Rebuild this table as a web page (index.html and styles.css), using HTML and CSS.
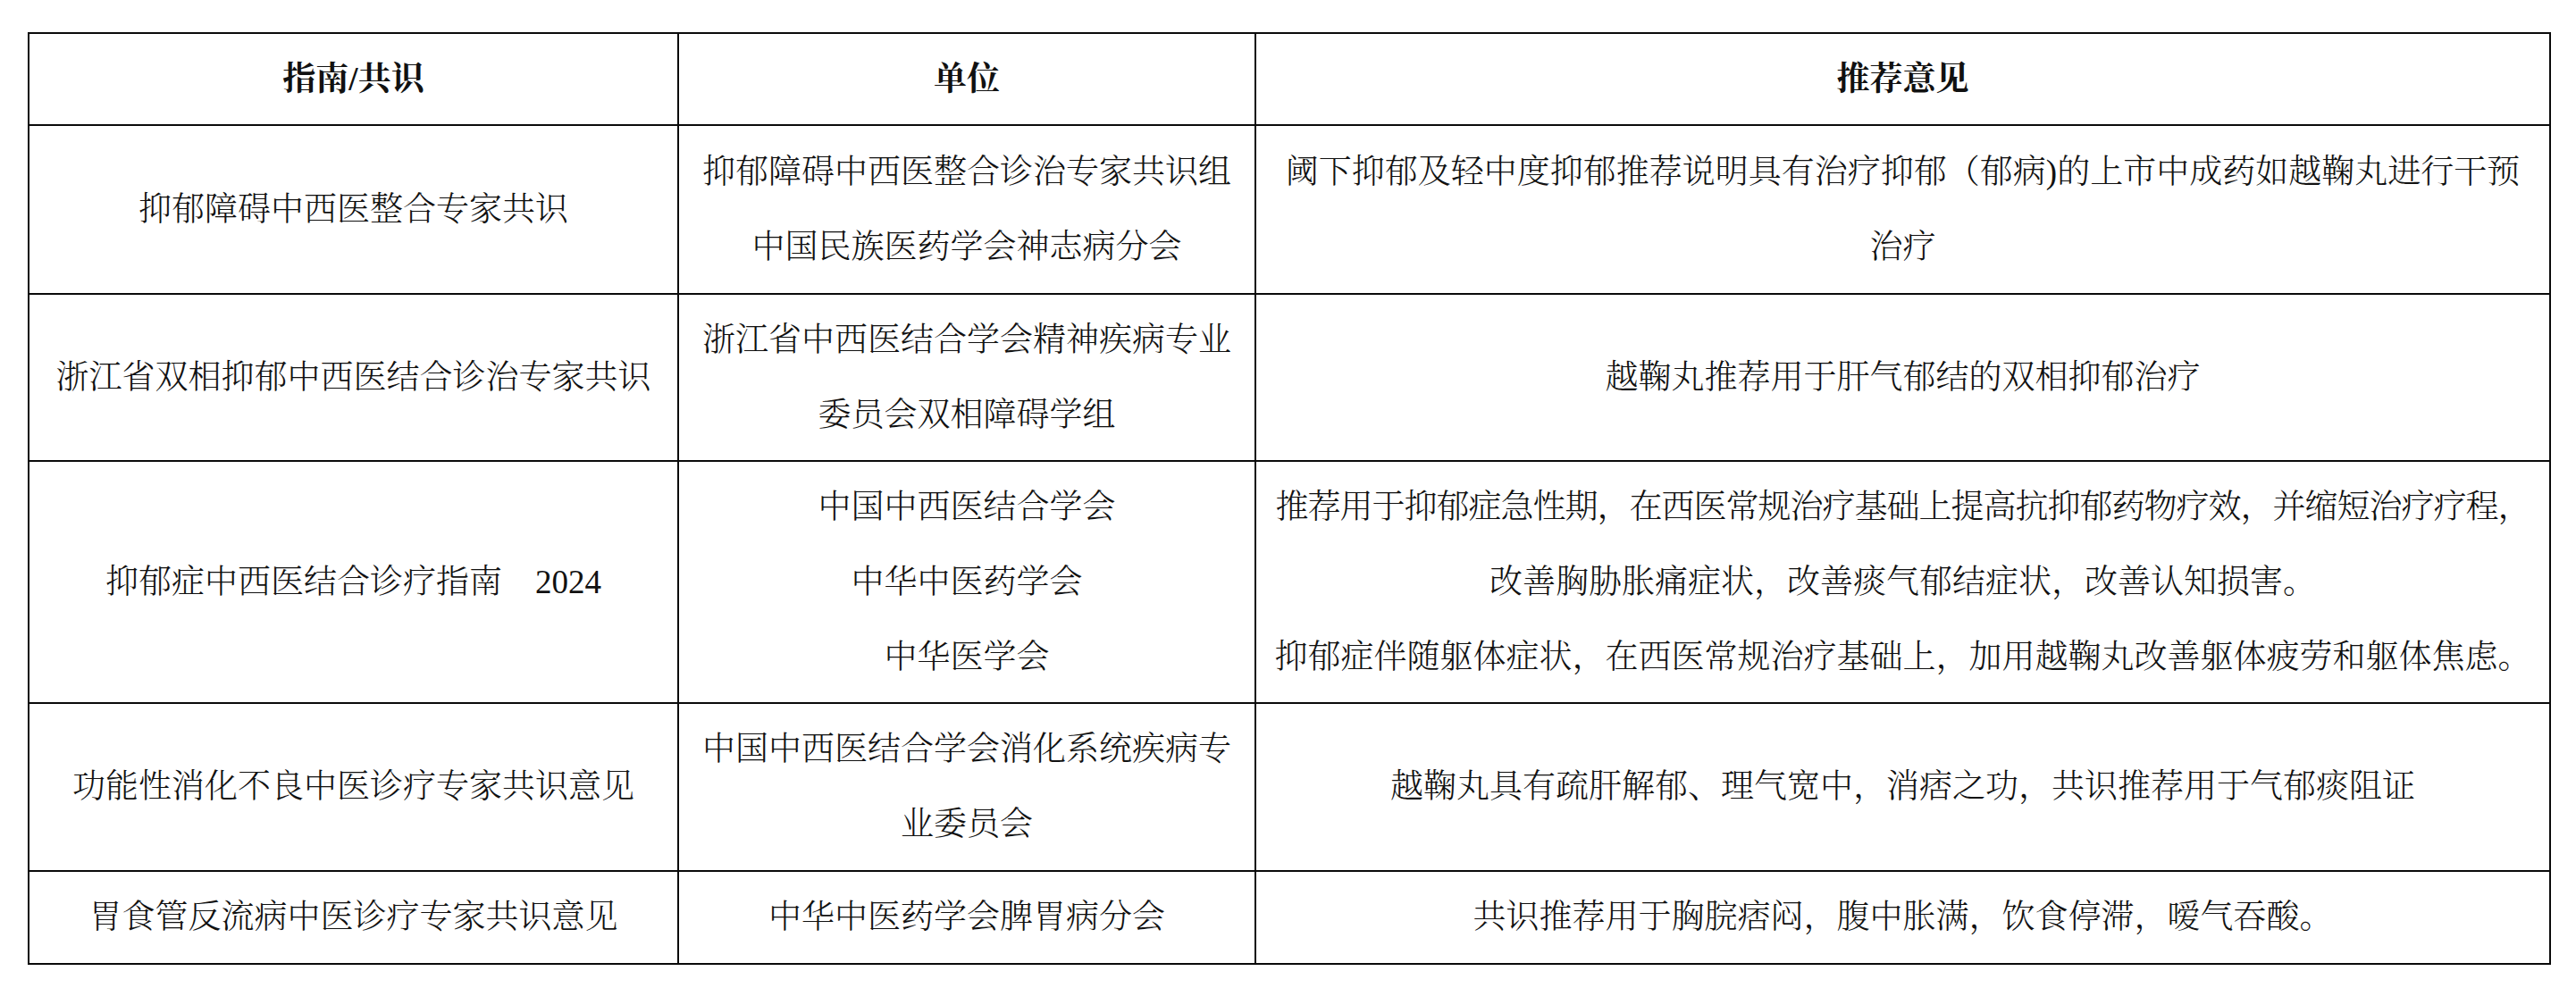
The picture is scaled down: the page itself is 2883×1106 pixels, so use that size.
FILE: index.html
```html
<!DOCTYPE html>
<html lang="zh-CN">
<head>
<meta charset="utf-8">
<title>越鞠丸 指南/共识推荐</title>
<link rel="stylesheet" href="styles.css">
</head>
<body>
<div class="page">
  <div class="grid">
    <div class="cell head">指南/共识</div>
    <div class="cell head">单位</div>
    <div class="cell head">推荐意见</div>

    <div class="cell">抑郁障碍中西医整合专家共识</div>
    <div class="cell">抑郁障碍中西医整合诊治专家共识组<br>中国民族医药学会神志病分会</div>
    <div class="cell">阈下抑郁及轻中度抑郁推荐说明具有治疗抑郁（郁病)的上市中成药如越鞠丸进行干预<br>治疗</div>

    <div class="cell">浙江省双相抑郁中西医结合诊治专家共识</div>
    <div class="cell">浙江省中西医结合学会精神疾病专业<br>委员会双相障碍学组</div>
    <div class="cell">越鞠丸推荐用于肝气郁结的双相抑郁治疗</div>

    <div class="cell">抑郁症中西医结合诊疗指南　2024</div>
    <div class="cell">中国中西医结合学会<br>中华中医药学会<br>中华医学会</div>
    <div class="cell"><div class="lines"><div class="tight">推荐用于抑郁症急性期，在西医常规治疗基础上提高抗抑郁药物疗效，并缩短治疗疗程，</div><div>改善胸胁胀痛症状，改善痰气郁结症状，改善认知损害。</div><div>抑郁症伴随躯体症状，在西医常规治疗基础上，加用越鞠丸改善躯体疲劳和躯体焦虑。</div></div></div>

    <div class="cell">功能性消化不良中医诊疗专家共识意见</div>
    <div class="cell">中国中西医结合学会消化系统疾病专<br>业委员会</div>
    <div class="cell">越鞠丸具有疏肝解郁、理气宽中，消痞之功，共识推荐用于气郁痰阻证</div>

    <div class="cell">胃食管反流病中医诊疗专家共识意见</div>
    <div class="cell">中华中医药学会脾胃病分会</div>
    <div class="cell">共识推荐用于胸脘痞闷，腹中胀满，饮食停滞，嗳气吞酸。</div>
  </div>
</div>
</body>
</html>
```

FILE: styles.css
```css
html, body {
  margin: 0;
  padding: 0;
  background: #ffffff;
}

.page {
  padding: 36px 0 0 31px;
}

.grid {
  display: grid;
  grid-template-columns: 727px 646px 1449px;
  grid-template-rows: 103px 189px 187px 271px 188px 104px;
  width: max-content;
  border-top: 2px solid #0a0a0a;
  border-left: 2px solid #0a0a0a;
}

.cell {
  box-sizing: border-box;
  display: flex;
  align-items: center;
  justify-content: center;
  text-align: center;
  border-right: 2px solid #0a0a0a;
  border-bottom: 2px solid #0a0a0a;
  font-family: "Liberation Serif", "Noto Serif CJK SC", "Noto Sans CJK SC", serif;
  font-size: 37px;
  font-weight: 300;
  line-height: 84px;
  color: #111111;
  white-space: nowrap;
}

.lines {
  display: flex;
  flex-direction: column;
  align-items: center;
}

.tight {
  letter-spacing: -1px;
}

.head {
  font-weight: 700;
}
```
